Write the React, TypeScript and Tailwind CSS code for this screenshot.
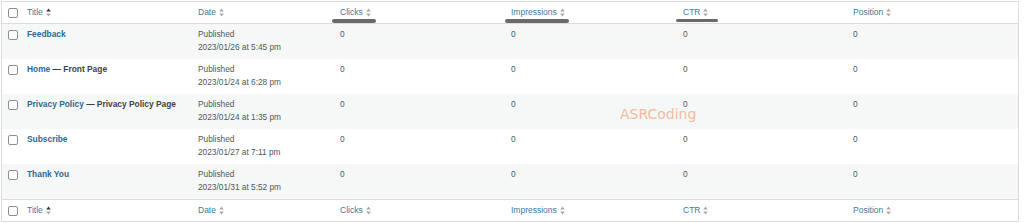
const rows = [
  { title: "Feedback", suffix: "", date: "2023/01/26 at 5:45 pm" },
  { title: "Home", suffix: "Front Page", date: "2023/01/24 at 6:28 pm" },
  { title: "Privacy Policy", suffix: "Privacy Policy Page", date: "2023/01/24 at 1:35 pm" },
  { title: "Subscribe", suffix: "", date: "2023/01/27 at 7:11 pm" },
  { title: "Thank You", suffix: "", date: "2023/01/31 at 5:52 pm" },
];

const cols = "grid grid-cols-[17px_171px_142px_171px_172px_170px_1fr]";

const SortIcon = ({ active }: { active?: boolean }) => (
  <svg width="5" height="9" viewBox="0 0 5 9" className="shrink-0">
    <path d="M2.5 0.5 L4.8 3.6 L0.2 3.6 Z" fill={active ? "#2c3338" : "#a7aaad"} />
    <path d="M2.5 8.5 L4.8 5.4 L0.2 5.4 Z" fill="#a7aaad" />
  </svg>
);

const Checkbox = () => (
  <div className="w-[10px] h-[10px] rounded-[2px] border border-[#8c8f94] bg-white" />
);

const HeaderRow = ({ top }: { top?: boolean }) => {
  const heads = ["Title", "Date", "Clicks", "Impressions", "CTR", "Position"];
  return (
    <div className={`${cols} h-[22px] items-center bg-white ${top ? "border-b border-[#dcdcde]" : "border-t border-[#dcdcde]"}`}>
      <div className="pl-[6px] flex items-center">
        <Checkbox />
      </div>
      {heads.map((h, i) => (
        <div key={h} className="pl-[8px] flex items-center gap-[3px] text-[8.5px] text-[#4277a2]">
          <span>{h}</span>
          <SortIcon active={i === 0} />
        </div>
      ))}
    </div>
  );
};

export default function App() {
  return (
    <div className="w-[1024px] h-[223px] bg-white pt-[1px] pl-[1px] relative" style={{ fontFamily: '"Liberation Sans", Arial, sans-serif' }}>
      <div className="w-[1018px] border border-[#dcdcde]">
        <HeaderRow top />
        {rows.map((r, i) => (
          <div key={r.title} className={`${cols} h-[35px] pt-[4px] text-[8.3px] leading-[13px] text-[#50575e] ${i % 2 === 0 ? "bg-[#f6f7f7]" : "bg-white"}`}>
            <div className="pl-[6px] pt-[2px]">
              <Checkbox />
            </div>
            <div className="pl-[8px] font-bold text-[8.4px]">
              <span className="text-[#2c6a96]">{r.title}</span>
              {r.suffix && <span className="text-[#3c434a]"> — {r.suffix}</span>}
            </div>
            <div className="pl-[8px]">
              <div>Published</div>
              <div>{r.date}</div>
            </div>
            <div className="pl-[8px]">0</div>
            <div className="pl-[8px]">0</div>
            <div className="pl-[8px]">0</div>
            <div className="pl-[8px]">0</div>
          </div>
        ))}
        <HeaderRow />
      </div>

      {/* marker strokes under headings */}
      <div className="absolute left-[332px] top-[19px] w-[44px] h-[4px] rounded-full bg-[#6a6a6a] blur-[0.4px]" />
      <div className="absolute left-[505px] top-[19px] w-[64px] h-[4px] rounded-full bg-[#6a6a6a] blur-[0.4px]" />
      <div className="absolute left-[676px] top-[19px] w-[42px] h-[3px] rounded-full bg-[#6a6a6a] blur-[0.4px]" />

      {/* watermark */}
      <div className="absolute left-[620px] top-[104px] text-[14px] text-[#f4bb9c]" style={{ fontFamily: '"DejaVu Sans", sans-serif' }}>
        ASRCoding
      </div>
    </div>
  );
}
